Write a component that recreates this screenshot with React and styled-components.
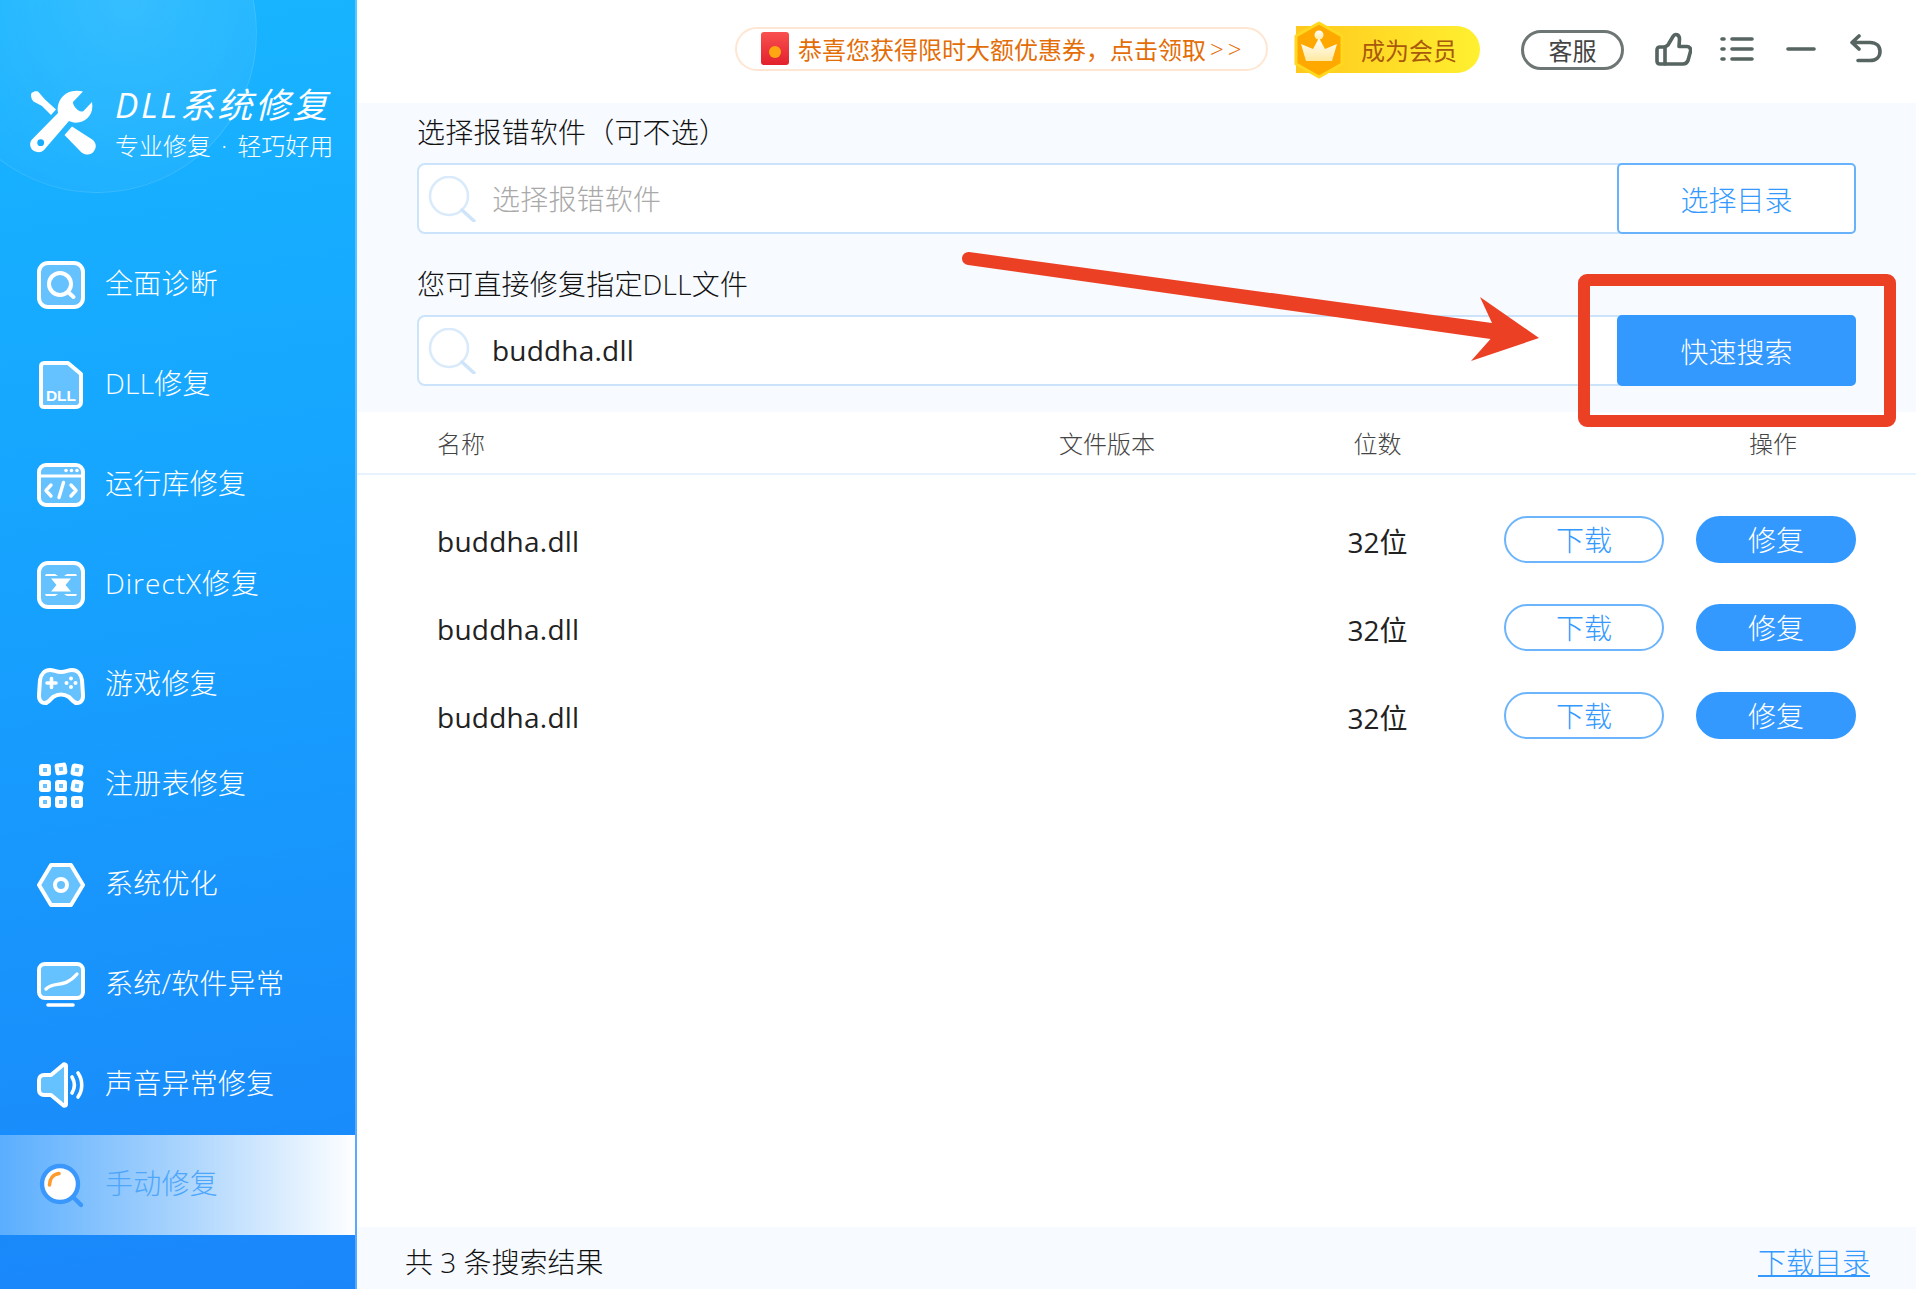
import styled, { createGlobalStyle } from "styled-components";

const GlobalStyle = createGlobalStyle`
    html, body {
        margin: 0;
        padding: 0;
        background: #fff;
    }
    * {
        box-sizing: border-box;
    }
    body {
        font-family: "Open Sans", "Noto Sans CJK SC", sans-serif;
    }
`;

const Page = styled.div`
    position: relative;
    display: flex;
    width: 1916px;
    height: 1289px;
    overflow: hidden;
    background: #fff;
`;

/* ---------- sidebar ---------- */

const Sidebar = styled.aside`
    position: relative;
    width: 357px;
    flex: none;
    overflow: hidden;
    background: linear-gradient(172deg, #18b5ff 0%, #16a6ff 35%, #1a86fa 100%);
    border-right: 2px solid rgba(255, 255, 255, 0.28);
`;

const Glow = styled.div`
    position: absolute;
    left: -63px;
    top: -127px;
    width: 320px;
    height: 320px;
    border-radius: 50%;
    border: 1px solid rgba(255, 255, 255, 0.1);
    background: radial-gradient(circle at 60% 40%, rgba(255, 255, 255, 0.13), rgba(255, 255, 255, 0.02) 85%);
`;

const Brand = styled.div`
    position: relative;
    display: flex;
    gap: 5px;
    height: 235px;
    padding: 80px 0 0 20px;
    color: #fff;
`;

const BrandText = styled.div`
    padding-top: 5px;
`;

const BrandTitle = styled.div`
    font-size: 35px;
    line-height: 40px;
    font-style: italic;
    letter-spacing: 2.6px;
    white-space: nowrap;
`;

const BrandSub = styled.div`
    font-size: 24px;
    line-height: 42px;
    white-space: pre;
    font-weight: 300;
`;

const BrandDot = styled.span`
    margin: 0 4px;
`;

const NavList = styled.nav`
    position: relative;
    display: flex;
    flex-direction: column;
`;

const NavItem = styled.div`
    display: flex;
    align-items: center;
    gap: 20px;
    height: 100px;
    width: 357px;
    padding-left: 37px;
    font-size: 28px;
    font-weight: 300;
    color: ${(p) => (p.$active ? "#4ea6fb" : "#fff")};
    background: ${(p) => (p.$active ? "linear-gradient(90deg, #5aaefe 0%, #a8d3fd 50%, #ffffff 100%)" : "none")};
`;

const NavLabel = styled.span`
    margin-bottom: 6px;
    letter-spacing: ${(p) => p.$tracking || 0.25}px;
`;

const NavIcon = styled.svg`
    width: 48px;
    height: 48px;
    flex: none;
`;

/* ---------- main column ---------- */

const Main = styled.main`
    flex: 1;
    min-width: 0;
    display: flex;
    flex-direction: column;
`;

const TopBar = styled.header`
    display: flex;
    align-items: center;
    justify-content: flex-end;
    height: 103px;
    padding: 0 34px 6px 0;
    flex: none;
`;

const Promo = styled.div`
    display: flex;
    align-items: center;
    gap: 9px;
    width: 533px;
    height: 44px;
    padding-left: 24px;
    border: 2px solid #ffe6d2;
    border-radius: 22px;
    font-size: 24px;
    color: #e36d06;
    white-space: nowrap;
`;

const PromoArrows = styled.span`
    margin-left: -9px;
    padding-left: 4px;
    letter-spacing: 4px;
    font-weight: 300;
`;

const Vip = styled.div`
    position: relative;
    display: flex;
    align-items: center;
    width: 184px;
    height: 47px;
    margin: 2px 0 0 28px;
    padding-left: 65px;
    border-radius: 0 24px 24px 0;
    background: linear-gradient(90deg, #ffc81d, #fff030);
    font-size: 24px;
    color: #a9590d;
    white-space: nowrap;
`;

const VipBadge = styled.svg`
    position: absolute;
    left: -3px;
    top: -5px;
    width: 52px;
    height: 58px;
`;

const Service = styled.div`
    display: flex;
    align-items: center;
    justify-content: center;
    width: 103px;
    height: 40px;
    margin: 2px 0 0 41px;
    border: 3px solid #6d7675;
    border-radius: 20px;
    font-size: 24px;
    color: #444;
`;

const ToolIcon = styled.svg`
    flex: none;
    margin-left: ${(p) => p.$gap}px;
    fill: none;
    stroke: #566462;
    stroke-width: 3.6;
    stroke-linecap: round;
    stroke-linejoin: round;
`;

const SearchPanel = styled.section`
    flex: none;
    height: 309px;
    padding: 11px 60px 0;
    background: #f7faff;
`;

const FieldLabel = styled.div`
    font-size: 28px;
    line-height: 36px;
    margin-bottom: 13px;
    margin-top: ${(p) => p.$top || 0}px;
    color: #111;
    font-weight: 300;
    letter-spacing: 0.2px;
`;

const FieldRow = styled.div`
    display: flex;
    height: 71px;
`;

const InputBox = styled.div`
    flex: 1;
    display: flex;
    align-items: center;
    gap: 16px;
    margin-right: -16px;
    padding: 0 0 0 9px;
    background: #fff;
    border: 2px solid #cbe3fb;
    border-radius: 8px 0 0 8px;
    font-size: 28px;
    color: ${(p) => (p.$placeholder ? "#a9a9a9" : "#222")};
    font-weight: ${(p) => (p.$placeholder ? 300 : 400)};
    letter-spacing: 0.2px;
`;

const InputText = styled.span`
    margin-bottom: 2px;
`;

const FieldButton = styled.div`
    position: relative;
    display: flex;
    align-items: center;
    justify-content: center;
    width: 239px;
    flex: none;
    border-radius: 5px;
    border: 2.5px solid ${(p) => (p.$solid ? "#3399ff" : "#68b2fc")};
    background: ${(p) => (p.$solid ? "#3399ff" : "#fff")};
    color: ${(p) => (p.$solid ? "#fff" : "#3399ff")};
    font-size: 28px;
    font-weight: 300;
`;

const TableHead = styled.div`
    display: grid;
    grid-template-columns: 622px 218px 201px 1fr;
    align-items: center;
    height: 63px;
    padding: 0 60px 0 80px;
    border-bottom: 2px solid #e6f2fe;
    font-size: 24px;
    font-weight: 300;
    color: #444;
    flex: none;
`;

const Rows = styled.div`
    flex: 1;
    padding-top: 20px;
`;

const Row = styled.div`
    display: grid;
    grid-template-columns: 622px 218px 201px 1fr;
    align-items: center;
    height: 88px;
    padding: 0 60px 0 80px;
    font-size: 28px;
    color: #222;
`;

const NameCell = styled.div`
    padding-top: 3px;
    letter-spacing: 0.25px;
`;

const CenterCell = styled.div`
    text-align: center;
    padding-top: ${(p) => p.$drop || 0}px;
`;

const HeadAction = styled.div`
    text-align: right;
    padding-right: 59px;
`;

const Actions = styled.div`
    display: flex;
    justify-content: flex-end;
    gap: 32px;
`;

const PillButton = styled.div`
    display: flex;
    align-items: center;
    justify-content: center;
    width: 160px;
    height: 47px;
    border-radius: 24px;
    border: 2.5px solid ${(p) => (p.$solid ? "#3399ff" : "#6cb4fc")};
    background: ${(p) => (p.$solid ? "#3399ff" : "#fff")};
    color: ${(p) => (p.$solid ? "#fff" : "#3399ff")};
    font-size: 28px;
    font-weight: 300;
`;

const Footer = styled.footer`
    display: flex;
    align-items: center;
    justify-content: space-between;
    height: 62px;
    padding: 6px 46px 0 48px;
    background: #f7faff;
    font-size: 28px;
    font-weight: 300;
    color: #111;
    flex: none;
`;

const FooterLink = styled.span`
    color: #3399ff;
    text-decoration: underline;
`;

/* ---------- annotation drawn over the screenshot ---------- */

const RedBox = styled.div`
    position: absolute;
    left: 1578px;
    top: 274px;
    width: 318px;
    height: 153px;
    border: 12px solid #ec4025;
    border-radius: 9px;
`;

const ArrowMark = styled.svg`
    position: absolute;
    left: 960px;
    top: 245px;
    width: 585px;
    height: 120px;
`;

/* ---------- icons ---------- */

const LogoIcon = () => (
    <svg width="90" height="80" viewBox="0 0 90 80" style={{ flex: "none" }}>
        <path fill="#fff" d="M11.5 60 L38 33 C36.5 25 40 17 47 13 C52 10.5 58 10 63 11.5 L53 22 C52.5 24 56 29 58.5 30.5 C60 31.5 62 32 63.5 31 L72 22 C74 33 68 41 58 42.5 C54 43 51 42 49 41 L24 70 C20 74 13 72 11 68 C9.5 65 10 62 11.5 60 Z" />
        <circle cx="20.7" cy="62.7" r="3.4" fill="#17adff" />
        <path fill="#fff" d="M11.5 13 C14 11 16 11 18 11.5 L25 19.5 L36 29.5 L31 35 L22 26 L13.5 21.5 C11 19 10.5 15 11.5 13 Z" />
        <path fill="#fff" d="M52 46.5 L44.5 55 L61 72 C66 76 72 75 74 71 C77 67 76 63 73 60 Z" />
    </svg>
);

const FILL = "#66c1ff";

const iconShapes = {
    scan: (
        <>
            <rect x="2" y="2" width="44" height="44" rx="9" fill={FILL} stroke="#fff" strokeWidth="4" />
            <circle cx="23" cy="23" r="11" fill="none" stroke="#fff" strokeWidth="4" />
            <path d="M31 31 L36.5 36" stroke="#fff" strokeWidth="4" strokeLinecap="round" />
        </>
    ),
    dll: (
        <>
            <path d="M7 2 H31 L44 13 V41 C44 44 42 46 39 46 H7 C4 46 4 44 4 41 V7 C4 4 4 2 7 2 Z" fill={FILL} stroke="#fff" strokeWidth="4" strokeLinejoin="round" />
            <text x="24" y="40" textAnchor="middle" fontFamily="'Liberation Sans', sans-serif" fontWeight="700" fontSize="15.5" fill="#fff">DLL</text>
        </>
    ),
    runtime: (
        <>
            <rect x="2" y="4" width="44" height="40" rx="7" fill={FILL} stroke="#fff" strokeWidth="4" />
            <path d="M2 15 H46" stroke="#fff" strokeWidth="3" />
            <circle cx="29" cy="9.5" r="1.8" fill="#fff" />
            <circle cx="34.5" cy="9.5" r="1.8" fill="#fff" />
            <circle cx="40" cy="9.5" r="1.8" fill="#fff" />
            <path d="M14 24 L9 29.5 L14 35 M34 24 L39 29.5 L34 35 M26.5 21.5 L22 36.5" fill="none" stroke="#fff" strokeWidth="3.4" strokeLinecap="round" strokeLinejoin="round" />
        </>
    ),
    directx: (
        <>
            <rect x="2" y="2" width="44" height="44" rx="9" fill={FILL} stroke="#fff" strokeWidth="4" />
            <path d="M9 13 H18 L21 15 H8 Z M39 13 H30 L27 15 H40 Z M14 17.5 H34 L28.5 24 L34 30.5 H14 L19.5 24 Z M8 33 H21 L18 35 H9 Z M40 33 H27 L30 35 H39 Z" fill="#fff" />
        </>
    ),
    game: (
        <>
            <path d="M13 9 C17 9 19 11 24 11 C29 11 31 9 35 9 C40 9 44 13 45 19 L46 34 C46.5 42 40 44 36 40 L32 36 C27 33 21 33 16 36 L12 40 C8 44 1.5 42 2 34 L3 19 C4 13 8 9 13 9 Z" fill={FILL} stroke="#fff" strokeWidth="4" strokeLinejoin="round" />
            <path d="M10 22 H19 M14.5 17.5 V26.5" stroke="#fff" strokeWidth="3.6" strokeLinecap="round" />
            <circle cx="34" cy="17.5" r="2" fill="#fff" />
            <circle cx="34" cy="26" r="2" fill="#fff" />
            <circle cx="29.5" cy="22" r="2" fill="#fff" />
            <circle cx="38.5" cy="22" r="2" fill="#fff" />
        </>
    ),
    grid: (
        <g fill={FILL} stroke="#fff" strokeWidth="4" strokeLinejoin="round">
            <rect x="4" y="5" width="8" height="8" rx="1" />
            <rect x="20" y="4" width="8" height="8" rx="1" transform="rotate(-8 24 8)" />
            <rect x="36" y="5" width="8" height="8" rx="1" transform="rotate(10 40 9)" />
            <rect x="4" y="21" width="8" height="8" rx="1" />
            <rect x="20" y="21" width="8" height="8" rx="1" />
            <rect x="36" y="21" width="8" height="8" rx="1" transform="rotate(10 40 25)" />
            <rect x="4" y="37" width="8" height="8" rx="1" />
            <rect x="20" y="37" width="8" height="8" rx="1" />
            <rect x="36" y="37" width="8" height="8" rx="1" />
        </g>
    ),
    hex: (
        <>
            <path d="M14 4 H34 L46 24 L34 44 H14 L2 24 Z" fill={FILL} stroke="#fff" strokeWidth="4" strokeLinejoin="round" />
            <circle cx="24" cy="24" r="6" fill="none" stroke="#fff" strokeWidth="4" />
        </>
    ),
    monitor: (
        <>
            <rect x="2" y="3" width="44" height="34" rx="6" fill={FILL} stroke="#fff" strokeWidth="4" />
            <path d="M9 28 C18 19 26 29 40 13" fill="none" stroke="#fff" strokeWidth="3.4" strokeLinecap="round" />
            <path d="M11 44 H36" stroke="#fff" strokeWidth="3.6" strokeLinecap="round" />
        </>
    ),
    sound: (
        <>
            <path d="M29 5 V43 C29 45 27 45 26 44 L14 34 H7 C4 34 2 32 2 29 V19 C2 16 4 14 7 14 H14 L26 4 C27 3 29 3 29 5 Z" fill={FILL} stroke="#fff" strokeWidth="4" strokeLinejoin="round" />
            <path d="M35 16 C38 21 38 27 35 32 M41 12 C46 19 46 29 41 36" fill="none" stroke="#fff" strokeWidth="3.6" strokeLinecap="round" />
        </>
    ),
    manual: (
        <>
            <circle cx="23" cy="23" r="18" fill="#fff" stroke="#3a97fb" strokeWidth="4.4" />
            <path d="M36 36 L44 44" stroke="#3a97fb" strokeWidth="4.4" strokeLinecap="round" />
            <path d="M12.5 24 C12.5 18 16 13.5 22 12.5" fill="none" stroke="#ff9a2c" strokeWidth="3.6" strokeLinecap="round" />
        </>
    ),
};

const SearchGlyph = () => (
    <svg width="48" height="46" viewBox="0 0 48 46" style={{ flex: "none" }}>
        <circle cx="21" cy="20" r="19" fill="none" stroke="#d9ebfb" strokeWidth="2.6" />
        <path d="M34 34 L46 45" stroke="#cde4fa" strokeWidth="3.4" strokeLinecap="round" />
    </svg>
);

const navItems = [
    { icon: "scan", label: "全面诊断" },
    { icon: "dll", label: "DLL修复" },
    { icon: "runtime", label: "运行库修复" },
    { icon: "directx", label: "DirectX修复", tracking: 1 },
    { icon: "game", label: "游戏修复" },
    { icon: "grid", label: "注册表修复" },
    { icon: "hex", label: "系统优化" },
    { icon: "monitor", label: "系统/软件异常" },
    { icon: "sound", label: "声音异常修复" },
    { icon: "manual", label: "手动修复" },
];

const results = ["buddha.dll", "buddha.dll", "buddha.dll"];

export default function App() {
    return (
        <Page>
            <GlobalStyle />
            <Sidebar>
                <Glow />
                <Brand>
                    <LogoIcon />
                    <BrandText>
                        <BrandTitle>DLL系统修复</BrandTitle>
                        <BrandSub>专业修复 <BrandDot>·</BrandDot> 轻巧好用</BrandSub>
                    </BrandText>
                </Brand>
                <NavList>
                    {navItems.map((item) => (
                        <NavItem key={item.icon} $active={item.icon === "manual"}>
                            <NavIcon viewBox="0 0 48 48">{iconShapes[item.icon]}</NavIcon>
                            <NavLabel $tracking={item.tracking}>{item.label}</NavLabel>
                        </NavItem>
                    ))}
                </NavList>
            </Sidebar>

            <Main>
                <TopBar>
                    <Promo>
                        <svg width="28" height="33" viewBox="0 0 28 33" style={{ flex: "none" }}>
                            <defs>
                                <linearGradient id="packet" x1="0" y1="0" x2="0" y2="1">
                                    <stop offset="0" stopColor="#f9504f" />
                                    <stop offset="1" stopColor="#e2212d" />
                                </linearGradient>
                            </defs>
                            <rect width="28" height="33" rx="3" fill="url(#packet)" />
                            <circle cx="14" cy="20" r="6" fill="#ffa712" />
                        </svg>
                        恭喜您获得限时大额优惠券，点击领取
                        <PromoArrows>&gt;&gt;</PromoArrows>
                    </Promo>
                    <Vip>
                        <VipBadge viewBox="0 0 52 58">
                            <defs>
                                <linearGradient id="crown" x1="0" y1="0" x2="0" y2="1">
                                    <stop offset="0" stopColor="#ffffff" />
                                    <stop offset="1" stopColor="#ffe9a0" />
                                </linearGradient>
                            </defs>
                            <path d="M26 2 L49 15 V43 L26 56 L3 43 V15 Z" fill="#ffa800" stroke="#ffd81f" strokeWidth="3" strokeLinejoin="round" />
                            <circle cx="26" cy="14" r="4.5" fill="url(#crown)" />
                            <path d="M26 17 L32 28 L44 23 L39 40 H13 L8 23 L20 28 Z" fill="url(#crown)" />
                        </VipBadge>
                        成为会员
                    </Vip>
                    <Service>客服</Service>
                    <ToolIcon $gap={31} width="37" height="34" viewBox="0 0 37 34">
                        <path d="M10 32 H28 C30.5 32 32 31 33 28.5 L35.5 19.5 C36 16.5 34.5 14.5 32 14.5 H24 L24.5 7 C24.5 2.5 20 1 18 4.5 L13 13 L10 15" />
                        <path d="M10 15 H5 C3 15 2 16 2 18 V29 C2 31 3 32 5 32 H10 Z" />
                    </ToolIcon>
                    <ToolIcon $gap={28} width="34" height="30" viewBox="0 0 34 30">
                        <path d="M2 5 H4 M12 5 H32 M2 15 H4 M12 15 H32 M2 25 H4 M12 25 H32" />
                    </ToolIcon>
                    <ToolIcon $gap={32} width="30" height="8" viewBox="0 0 30 8">
                        <path d="M2 4 H28" />
                    </ToolIcon>
                    <ToolIcon $gap={34} width="32" height="30" viewBox="0 0 32 30">
                        <path d="M9 2 L2 8.5 L9 15 M3 8.5 H20 C26 8.5 30 12 30 17.5 C30 23 26 26.5 20 26.5 H8" />
                    </ToolIcon>
                </TopBar>

                <SearchPanel>
                    <FieldLabel>选择报错软件（可不选）</FieldLabel>
                    <FieldRow>
                        <InputBox $placeholder>
                            <SearchGlyph />
                            <InputText>选择报错软件</InputText>
                        </InputBox>
                        <FieldButton>选择目录</FieldButton>
                    </FieldRow>
                    <FieldLabel $top={32}>您可直接修复指定DLL文件</FieldLabel>
                    <FieldRow>
                        <InputBox>
                            <SearchGlyph />
                            <InputText>buddha.dll</InputText>
                        </InputBox>
                        <FieldButton $solid>快速搜索</FieldButton>
                    </FieldRow>
                </SearchPanel>

                <TableHead>
                    <div>名称</div>
                    <div>文件版本</div>
                    <CenterCell>位数</CenterCell>
                    <HeadAction>操作</HeadAction>
                </TableHead>

                <Rows>
                    {results.map((name, i) => (
                        <Row key={i}>
                            <NameCell>{name}</NameCell>
                            <div />
                            <CenterCell $drop={3}>32位</CenterCell>
                            <Actions>
                                <PillButton>下载</PillButton>
                                <PillButton $solid>修复</PillButton>
                            </Actions>
                        </Row>
                    ))}
                </Rows>

                <Footer>
                    <span>共 3 条搜索结果</span>
                    <FooterLink>下载目录</FooterLink>
                </Footer>
            </Main>

            <ArrowMark viewBox="960 245 585 120">
                <path fill="#ec4025" d="M969 252 L1492 323 L1480 297 L1539 338 L1471 361 L1490.5 339 L968 265 A6.5 6.5 0 0 1 969 252 Z" />
            </ArrowMark>
            <RedBox />
        </Page>
    );
}
